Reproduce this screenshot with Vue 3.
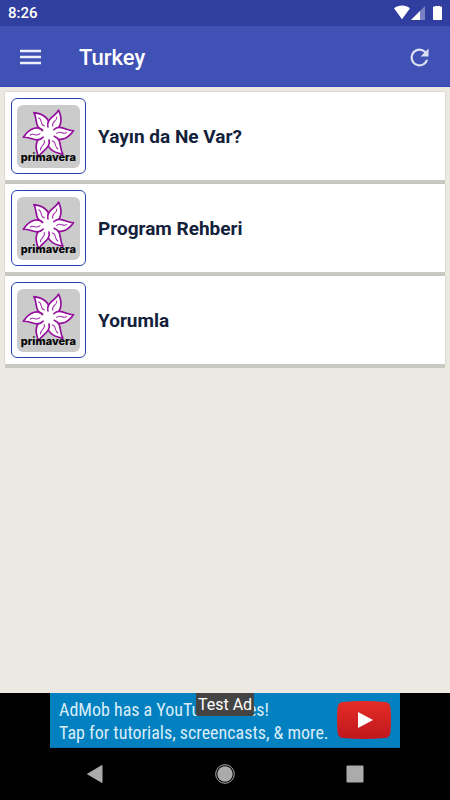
<script setup>
const items = ['Yayın da Ne Var?', 'Program Rehberi', 'Yorumla']
const petals = [-125, -66, -6, 55, 112, 171]
</script>

<template>
  <div class="screen">
    <div class="status">
      <span>8:26</span>
      <svg class="status-icons" width="52" height="26" viewBox="0 0 52 26" aria-hidden="true">
        <path d="M0 8.300C4.700 4.600 11.300 4.600 16 8.300L8 19.300Z" fill="#fff" />
        <path d="M31 6V20H17Z" fill="#7a80c4" />
        <path d="M26 11V20H17Z" fill="#fff" />
        <path d="M41 6.500V6h5v.5h1.200q.8 0 .8.8v12q0 .8-.8.8h-7.400q-.8 0-.8-.8v-12q0-.8.8-.8Z" fill="#fff" />
      </svg>
    </div>
    <header class="appbar">
      <button class="icon-button" aria-label="Menu">
        <svg width="22" height="16" viewBox="0 0 22 16"><path d="M0 2h21M0 8h21M0 14h21" stroke="#eceefa" stroke-width="2.300" /></svg>
      </button>
      <h1>Turkey</h1>
      <button class="icon-button refresh" aria-label="Refresh">
        <svg width="27" height="27" viewBox="0 0 24 24"><path fill="#dcdff2" d="M17.650 6.350A7.958 7.958 0 0 0 12 4a8 8 0 1 0 7.730 10h-2.080A6 6 0 1 1 12 6c1.660 0 3.140.69 4.220 1.780L13 11h7V4l-2.350 2.350z" /></svg>
      </button>
    </header>
    <main class="list">
      <a v-for="item in items" :key="item" class="card" href="#">
        <span class="thumb">
          <svg width="63" height="63" viewBox="0 0 189 189" role="img" aria-label="primavera">
            <rect width="189" height="189" rx="18" fill="#cbcbcb" />
            <g transform="translate(94 85)">
              <circle r="19" fill="#fff" />
              <g v-for="angle in petals" :key="angle" :transform="`rotate(${angle})`">
                <path d="M15 9C23 28 52 27 76 0C56 0 38 -25 17 -9" fill="#fff" stroke="#930f9b" stroke-width="5" stroke-linejoin="round" />
                <path d="M24 4C36 -8 43 11 56 3" fill="none" stroke="#a32bab" stroke-width="3" />
              </g>
              <circle r="14" fill="#fff" />
            </g>
            <text class="brand" x="94" y="167" text-anchor="middle">primavera</text>
          </svg>
        </span>
        <span class="title">{{ item }}</span>
      </a>
    </main>
    <footer class="bottom">
      <a class="ad" href="#">
        <span class="ad-copy">AdMob has a YouTube series!<br>Tap for tutorials, screencasts, &amp; more.</span>
        <svg width="54" height="38" viewBox="0 0 54 38" aria-hidden="true">
          <defs><linearGradient id="play-red" x2="0" y2="1"><stop stop-color="#e52d27" /><stop offset="1" stop-color="#bf171d" /></linearGradient></defs>
          <path d="M6 1Q27-1 48 1Q53 1 53.500 7Q54.500 19 53.500 31Q53 37 48 37Q27 39 6 37Q1 37 .5 31Q-.5 19 .5 7Q1 1 6 1Z" fill="url(#play-red)" />
          <path d="M21 11L36 19L21 27Z" fill="#fff" />
        </svg>
        <span class="test-label">Test Ad</span>
      </a>
      <nav class="system-nav">
        <button aria-label="Back"><svg width="18" height="20" viewBox="0 0 18 20"><path d="M16 1.500V18.500L1.500 10Z" fill="#ababab" stroke="#ababab" stroke-linejoin="round" /></svg></button>
        <button aria-label="Home"><svg width="20" height="20" viewBox="0 0 20 20"><circle cx="10" cy="10" r="9.300" fill="none" stroke="#ababab" /><circle cx="10" cy="10" r="7.700" fill="#ababab" /></svg></button>
        <button aria-label="Recent apps"><svg width="18" height="18" viewBox="0 0 18 18"><rect x=".5" y=".5" width="17" height="17" rx="1" fill="#ababab" /></svg></button>
      </nav>
    </footer>
  </div>
</template>

<style>
body { background: #ece9e2; }
</style>

<style scoped>
.screen {
  min-height: 100vh;
  display: flex;
  flex-direction: column;
  background: #ece9e2;
  font-family: Roboto, "Liberation Sans", sans-serif;
}
button { padding: 0; border: 0; background: none; display: flex; align-items: center; justify-content: center; }
svg { display: block; flex: none; }
a { color: inherit; text-decoration: none; }
.status {
  height: 26px;
  display: flex;
  align-items: center;
  justify-content: space-between;
  padding: 0 4px 0 8px;
  background: #303f9f;
  color: #fff;
  font-size: 15px;
  font-weight: 500;
  line-height: 20px;
}
.appbar {
  height: 61px;
  box-sizing: border-box;
  display: flex;
  align-items: center;
  padding: 2px 16px 0 20px;
  background: #3f51b5;
  border-bottom: 1px solid #3446bd;
}
h1 { flex: 1; margin: 0 0 0 37px; padding-top: 2px; color: #fff; font-size: 22px; font-weight: 500; line-height: 28px; }
.refresh { width: 30px; }
.list { flex: 1; display: flex; flex-direction: column; gap: 4px; padding: 5px; }
.card {
  height: 88px;
  box-sizing: border-box;
  display: flex;
  align-items: center;
  gap: 12px;
  padding: 0 6px;
  background: #fff;
  border-radius: 1px;
  box-shadow: 0 4px 0 #c8c9c1, 0 0 2px #b5b5ab;
}
.thumb {
  width: 75px;
  height: 76px;
  box-sizing: border-box;
  display: flex;
  align-items: center;
  justify-content: center;
  border: 1px solid #2940b0;
  border-radius: 6px;
}
.brand { font: 800 33px Inter, sans-serif; fill: #050505; }
.title { padding-top: 2px; color: #14213b; font-size: 19px; font-weight: 700; line-height: 24px; }
.bottom { background: #000; }
.ad {
  position: relative;
  width: 350px;
  height: 55px;
  box-sizing: border-box;
  margin: 0 auto;
  padding: 0 9px;
  display: flex;
  align-items: center;
  justify-content: space-between;
  background: #0280c0;
  border: solid #0874ad;
  border-width: 0 0 1px;
  color: #d9edf7;
}
.ad-copy { padding-top: 2px; font-family: "Roboto Condensed", Roboto, sans-serif; font-size: 18px; line-height: 23px; white-space: nowrap; }
.test-label {
  position: absolute;
  top: 0;
  left: 50%;
  transform: translateX(-50%);
  padding: 0 2px;
  border-radius: 0 0 2px 2px;
  background: #444;
  color: #fff;
  font-size: 16px;
  line-height: 23px;
  white-space: nowrap;
}
.system-nav { height: 52px; display: flex; align-items: center; justify-content: center; gap: 30px; }
.system-nav button { width: 100px; height: 40px; }
</style>
